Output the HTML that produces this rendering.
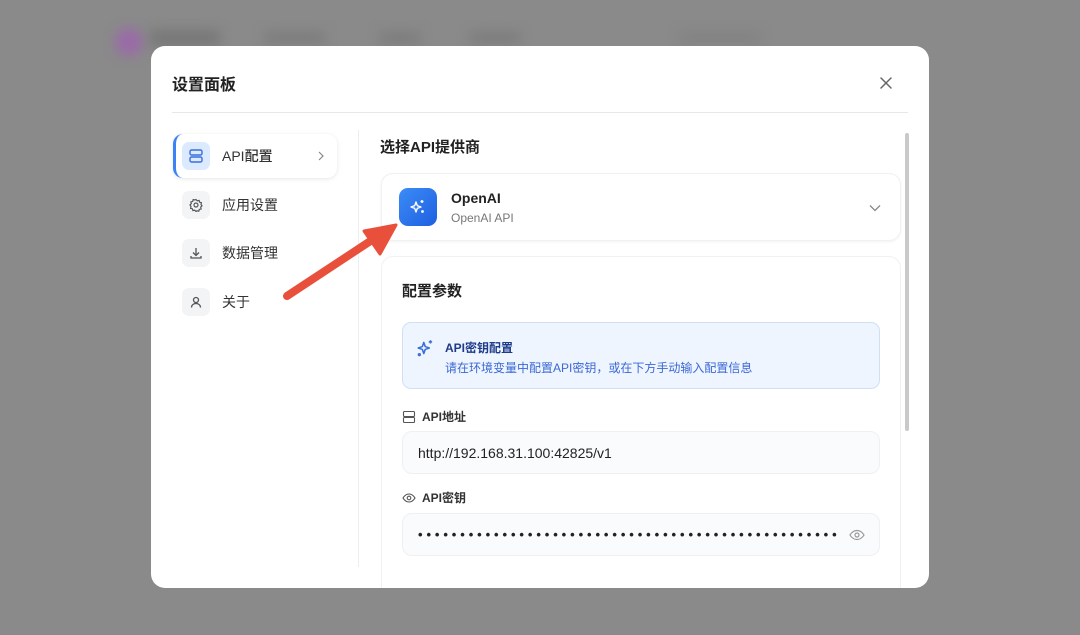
<!DOCTYPE html>
<html><head><meta charset="utf-8"><style>
*{box-sizing:border-box;margin:0;padding:0}
body{width:1080px;height:635px;overflow:hidden;background:#8a8a8a;font-family:"Liberation Sans","Noto Sans CJK SC",sans-serif;position:relative;color:#1f2937}
.abs{position:absolute}
.blur{filter:blur(6px)}
.modal{left:151px;top:46px;width:778px;height:542px;background:#fff;border-radius:14px;overflow:hidden}
.t{font-size:15px;font-weight:600;color:#222}
.navi{position:absolute;left:22px;width:164px;height:44px;border-radius:10px;display:flex;align-items:center;font-size:14px;color:#333}
.navi .ic{width:28px;height:28px;border-radius:7px;background:#f3f4f6;margin-left:9px;margin-right:12px;display:flex;align-items:center;justify-content:center}
.card{border:1px solid #f0f1f3;border-radius:12px;background:#fff}
.inp{position:absolute;left:251px;width:478px;height:43px;border:1px solid #eef0f3;border-radius:10px;background:#fafbfc;font-size:14px;color:#222;display:flex;align-items:center;padding-left:15px}
.lbl{position:absolute;left:251px;font-size:12px;font-weight:600;color:#333;display:flex;align-items:center;gap:6px}
</style></head><body>
<div class="abs blur" style="left:115px;top:28px;width:28px;height:28px;border-radius:50%;background:#9a6aa8"></div>
<div class="abs blur" style="left:150px;top:30px;width:70px;height:16px;background:#777"></div>
<div class="abs blur" style="left:265px;top:32px;width:60px;height:12px;background:#7c7c7c"></div>
<div class="abs blur" style="left:380px;top:32px;width:40px;height:12px;background:#7c7c7c"></div>
<div class="abs blur" style="left:470px;top:32px;width:50px;height:12px;background:#7c7c7c"></div>
<div class="abs blur" style="left:680px;top:32px;width:80px;height:12px;background:#828282"></div>

<div class="abs modal">
 <div class="abs t" style="left:21px;top:25px;font-size:16px">设置面板</div>
 <svg class="abs" style="left:728px;top:30px" width="14" height="14" viewBox="0 0 14 14"><path d="M2 2L12 12M12 2L2 12" stroke="#666" stroke-width="1.5" stroke-linecap="round"/></svg>
 <div class="abs" style="left:21px;top:66px;width:736px;height:1px;background:#e5e7eb"></div>
 <div class="abs" style="left:207px;top:84px;width:1px;height:437px;background:#eceef1"></div>
 <div class="abs" style="left:754px;top:87px;width:4px;height:298px;border-radius:2px;background:#c9c9c9"></div>

 <div class="navi" style="top:88px;background:#fff;box-shadow:0 1px 4px rgba(0,0,0,.1);border-left:3px solid #3b82f6">
  <div class="ic" style="background:#dbeafe;margin-left:6px"><svg width="16" height="16" viewBox="0 0 16 16" fill="none" stroke="#3b6fd8" stroke-width="1.4"><rect x="2" y="2" width="12" height="5" rx="1.5"/><rect x="2" y="9" width="12" height="5" rx="1.5"/></svg></div>
  <span style="font-weight:500">API配置</span>
  <svg style="margin-left:auto;margin-right:12px" width="8" height="10" viewBox="0 0 8 10"><path d="M2 1l4 4-4 4" stroke="#888" fill="none" stroke-width="1.2"/></svg>
 </div>
 <div class="navi" style="top:137px"><div class="ic"><svg width="14" height="14" viewBox="0 0 14 14" fill="none" stroke="#555" stroke-width="1.2"><circle cx="7" cy="7" r="2"/><path d="M7 1.5l1.3 1.3 1.8-.4.5 1.8 1.8.5-.4 1.8L13 7.8l-1.3 1.3.4 1.8-1.8.5-.5 1.8-1.8-.4L7 13.5l-1.3-1.3-1.8.4-.5-1.8-1.8-.5.4-1.8L1 7l1.3-1.3-.4-1.8 1.8-.5.5-1.8 1.8.4z"/></svg></div>应用设置</div>
 <div class="navi" style="top:185px"><div class="ic"><svg width="14" height="14" viewBox="0 0 14 14" fill="none" stroke="#555" stroke-width="1.3"><path d="M7 2v7M4 6.5L7 9.5 10 6.5M2 10v2h10v-2"/></svg></div>数据管理</div>
 <div class="navi" style="top:234px"><div class="ic"><svg width="14" height="14" viewBox="0 0 14 14" fill="none" stroke="#555" stroke-width="1.3"><circle cx="7" cy="5" r="2.5"/><path d="M2.5 12.5c0-2.5 2-4 4.5-4s4.5 1.5 4.5 4"/></svg></div>关于</div>

 <div class="abs t" style="left:229px;top:90px">选择API提供商</div>
 <div class="abs card" style="left:230px;top:127px;width:520px;height:68px;box-shadow:0 1px 3px rgba(0,0,0,.05)">
  <div class="abs" style="left:17px;top:14px;width:38px;height:38px;border-radius:9px;background:linear-gradient(135deg,#3b8cf7,#1f5fe0);display:flex;align-items:center;justify-content:center">
   <svg width="18" height="18" viewBox="0 0 18 18" fill="none" stroke="#fff" stroke-width="1.4" stroke-linejoin="round"><path d="M7 4l1.3 3.7L12 9l-3.7 1.3L7 14l-1.3-3.7L2 9l3.7-1.3z"/><path d="M13 2v3M11.5 3.5h3"/><circle cx="13.5" cy="13.5" r=".7"/></svg>
  </div>
  <div class="abs" style="left:69px;top:16px;font-size:14px;font-weight:700;color:#222">OpenAI</div>
  <div class="abs" style="left:69px;top:37px;font-size:12px;color:#777">OpenAI API</div>
  <svg class="abs" style="left:487px;top:30px" width="12" height="8" viewBox="0 0 12 8"><path d="M1 1.5l5 5 5-5" stroke="#888" fill="none" stroke-width="1.3"/></svg>
 </div>
 <div class="abs card" style="left:230px;top:210px;width:520px;height:360px"></div>
 <div class="abs t" style="left:251px;top:234px">配置参数</div>
 <div class="abs" style="left:251px;top:276px;width:478px;height:67px;border:1px solid #cfe0f5;border-radius:9px;background:#eef5fe">
  <svg class="abs" style="left:13px;top:15px" width="20" height="20" viewBox="0 0 18 18" fill="none" stroke="#3b6fd8" stroke-width="1.4" stroke-linejoin="round"><path d="M7 4l1.3 3.7L12 9l-3.7 1.3L7 14l-1.3-3.7L2 9l3.7-1.3z"/><path d="M13 2v3M11.5 3.5h3"/><circle cx="3" cy="15" r=".8"/></svg>
  <div class="abs" style="left:42px;top:16px;font-size:12px;font-weight:700;color:#1e3a8a">API密钥配置</div>
  <div class="abs" style="left:42px;top:36px;font-size:12px;color:#3b68d6">请在环境变量中配置API密钥，或在下方手动输入配置信息</div>
 </div>
 <div class="lbl" style="top:362px"><svg width="14" height="14" viewBox="0 0 14 14" fill="none" stroke="#555" stroke-width="1.1"><rect x="1.5" y="1.5" width="11" height="5" rx="1"/><rect x="1.5" y="7.5" width="11" height="5" rx="1"/></svg>API地址</div>
 <div class="inp" style="top:385px">http://192.168.31.100:42825/v1</div>
 <div class="lbl" style="top:443px"><svg width="14" height="14" viewBox="0 0 14 14" fill="none" stroke="#555" stroke-width="1.1"><path d="M1 7s2.2-4 6-4 6 4 6 4-2.2 4-6 4-6-4-6-4z"/><circle cx="7" cy="7" r="1.8"/></svg>API密钥</div>
 <div class="inp" style="top:467px;letter-spacing:3.9px;font-size:13px;font-weight:700;white-space:nowrap;overflow:hidden">••••••••••••••••••••••••••••••••••••••••••••••••••
  <svg style="position:absolute;right:14px;top:14px" width="16" height="14" viewBox="0 0 16 14" fill="none" stroke="#999" stroke-width="1.2"><path d="M1 7s2.5-4.5 7-4.5S15 7 15 7s-2.5 4.5-7 4.5S1 7 1 7z"/><circle cx="8" cy="7" r="2"/></svg>
 </div>
</div>
<svg class="abs" style="left:0;top:0" width="1080" height="635"><path d="M287 296L375 238" stroke="#e8503c" stroke-width="8" stroke-linecap="round"/><path d="M396 225L364 231 380 254z" fill="#e8503c" stroke="#e8503c" stroke-width="3" stroke-linejoin="round"/></svg>
</body></html>
